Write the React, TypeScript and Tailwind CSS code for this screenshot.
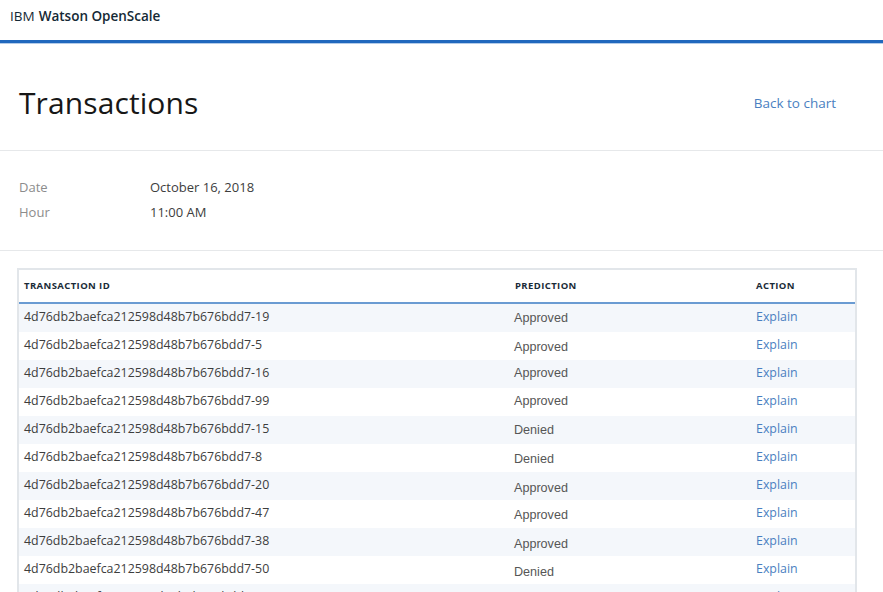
import React from "react";

const plex = { fontFamily: '"Open Sans", "Noto Sans", sans-serif' };

const rows = [
  { id: "4d76db2baefca212598d48b7b676bdd7-19", p: "Approved", shift: "pt-[2px] pl-[1px]" },
  { id: "4d76db2baefca212598d48b7b676bdd7-5", p: "Approved", shift: "pt-[4px]" },
  { id: "4d76db2baefca212598d48b7b676bdd7-16", p: "Approved", shift: "pt-[0px]" },
  { id: "4d76db2baefca212598d48b7b676bdd7-99", p: "Approved", shift: "pt-[0px]" },
  { id: "4d76db2baefca212598d48b7b676bdd7-15", p: "Denied", shift: "pt-[2px] pl-[2px]" },
  { id: "4d76db2baefca212598d48b7b676bdd7-8", p: "Denied", shift: "pt-[4px] pl-[3px]" },
  { id: "4d76db2baefca212598d48b7b676bdd7-20", p: "Approved", shift: "pt-[6px] pl-[1px]" },
  { id: "4d76db2baefca212598d48b7b676bdd7-47", p: "Approved", shift: "pt-[4px]" },
  { id: "4d76db2baefca212598d48b7b676bdd7-38", p: "Approved", shift: "pt-[6px]" },
  { id: "4d76db2baefca212598d48b7b676bdd7-50", p: "Denied", shift: "pt-[6px] pl-[2px]" },
  { id: "4d76db2baefca212598d48b7b676bdd7-37", p: "Approved", shift: "pt-[4px]" },
];

export default function App() {
  return (
    <div className="min-h-screen bg-white text-[#3d3d3d]" style={plex}>
      <header className="flex h-10 items-start px-[10px] pt-[6px] text-[13.5px] text-[#152935]">
        <span>IBM</span>
        <span className="ml-[4px] font-semibold">Watson OpenScale</span>
      </header>
      <div className="h-[3px] bg-[#2068bd]" />
      <div className="h-px bg-[#b4cce9]" />

      <section className="flex h-[107px] items-center justify-between border-b border-[#e6e8ea] pl-[19px] pr-[47px] pt-[10px]">
        <h1 className="text-[30px] font-normal tracking-[0.1px] text-[#171717]">
          Transactions
        </h1>
        <a className="pt-[2px] text-[13.5px] text-[#4a7fc1]">Back to chart</a>
      </section>

      <section className="border-b border-[#e6e8ea] pb-[26px] pl-[19px] pt-[25px] text-[13px]">
        <div className="flex h-[24px] items-center">
          <span className="w-[131px] text-[#8c8c8c]">Date</span>
          <span className="text-[#3d3d3d]">October 16, 2018</span>
        </div>
        <div className="flex h-[24px] items-center pt-[2px]">
          <span className="w-[131px] text-[#8c8c8c]">Hour</span>
          <span className="text-[#3d3d3d]">11:00 AM</span>
        </div>
      </section>

      <div className="ml-[17px] mr-[26px] mt-[17px] border-x-2 border-t-2 border-[#e2e6ea]">
        <div className="grid h-[34px] grid-cols-[490px_242px_1fr] items-center border-b-2 border-[#6a9bd2] text-[9.5px] font-bold tracking-[0.4px] text-[#1a2b38]">
          <span className="pl-[5px]">TRANSACTION ID</span>
          <span className="pl-[6px]">PREDICTION</span>
          <span className="pl-[5px]">ACTION</span>
        </div>
        {rows.map((r, i) => (
          <div
            key={r.id}
            className={
              "grid h-[28px] grid-cols-[490px_242px_1fr] text-[12.4px] " +
              (i % 2 === 0 ? "bg-[#f4f7fb]" : "bg-white")
            }
          >
            <span className="flex items-center pb-[1px] pl-[5px] text-[#3d3d3d]">{r.id}</span>
            <span className={"flex items-center pb-[2px] pl-[5px] " + r.shift}>
              <span
                className="text-[12.6px] text-[#565656]"
                style={{ fontFamily: '"Liberation Sans", Arial, sans-serif' }}
              >
                {r.p}
              </span>
            </span>
            <span className="flex items-center pb-[1px] pl-[5px] text-[#4a7fc1]">Explain</span>
          </div>
        ))}
      </div>
    </div>
  );
}
